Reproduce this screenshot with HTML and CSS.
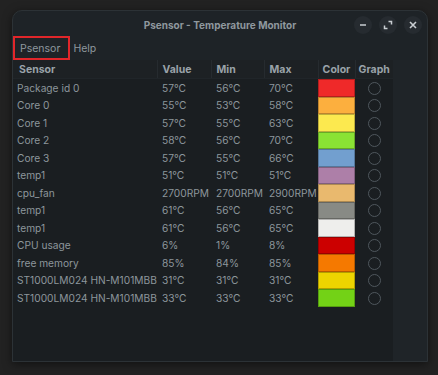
FILE: index.html
```html
<!DOCTYPE html>
<html lang="en">
<head>
<meta charset="UTF-8">
<meta name="viewport" content="width=device-width, initial-scale=1.0">
<title>Psensor - Temperature Monitor</title>
<link rel="stylesheet" href="styles.css">
</head>
<body>
<div class="window">
  <div class="titlebar">
    <div class="title">Psensor - Temperature Monitor</div>
    <div class="controls">
      <span class="ctl"><svg width="10" height="10" viewBox="0 0 10 10"><path d="M2 5h6" stroke="#c9ced2" stroke-width="1.6"/></svg></span>
      <span class="ctl"><svg width="10" height="10" viewBox="0 0 10 10"><path d="M5.5 1.5h3v3M4.5 8.5h-3v-3" stroke="#c9ced2" stroke-width="1.5" fill="none"/></svg></span>
      <span class="ctl"><svg width="10" height="10" viewBox="0 0 10 10"><path d="M2 2l6 6M8 2l-6 6" stroke="#c9ced2" stroke-width="1.6"/></svg></span>
    </div>
  </div>
  <div class="menubar">
    <span class="menu active">Psensor</span>
    <span class="menu">Help</span>
  </div>
  <div class="content">
    <table class="sensors">
      <colgroup>
        <col class="c-name"><col class="c-val"><col class="c-min"><col class="c-max"><col class="c-color"><col class="c-graph">
      </colgroup>
      <thead>
        <tr>
          <th>Sensor</th>
          <th>Value</th>
          <th>Min</th>
          <th>Max</th>
          <th class="center">Color</th>
          <th class="center">Graph</th>
        </tr>
      </thead>
      <tbody>
        <tr><td>Package id 0</td><td>57°C</td><td>56°C</td><td>70°C</td><td class="sw red"></td><td class="g"><span class="dot"></span></td></tr>
        <tr><td>Core 0</td><td>55°C</td><td>53°C</td><td>58°C</td><td class="sw orange"></td><td class="g"><span class="dot"></span></td></tr>
        <tr><td>Core 1</td><td>57°C</td><td>55°C</td><td>63°C</td><td class="sw yellow"></td><td class="g"><span class="dot"></span></td></tr>
        <tr><td>Core 2</td><td>58°C</td><td>56°C</td><td>70°C</td><td class="sw green"></td><td class="g"><span class="dot"></span></td></tr>
        <tr><td>Core 3</td><td>57°C</td><td>55°C</td><td>66°C</td><td class="sw blue"></td><td class="g"><span class="dot"></span></td></tr>
        <tr><td>temp1</td><td>51°C</td><td>51°C</td><td>51°C</td><td class="sw purple"></td><td class="g"><span class="dot"></span></td></tr>
        <tr><td>cpu_fan</td><td>2700RPM</td><td>2700RPM</td><td>2900RPM</td><td class="sw tan"></td><td class="g"><span class="dot"></span></td></tr>
        <tr><td>temp1</td><td>61°C</td><td>56°C</td><td>65°C</td><td class="sw gray"></td><td class="g"><span class="dot"></span></td></tr>
        <tr><td>temp1</td><td>61°C</td><td>56°C</td><td>65°C</td><td class="sw white"></td><td class="g"><span class="dot"></span></td></tr>
        <tr><td>CPU usage</td><td>6%</td><td>1%</td><td>8%</td><td class="sw darkred"></td><td class="g"><span class="dot"></span></td></tr>
        <tr><td>free memory</td><td>85%</td><td>84%</td><td>85%</td><td class="sw darkorange"></td><td class="g"><span class="dot"></span></td></tr>
        <tr><td>ST1000LM024 HN-M101MBB</td><td>31°C</td><td>31°C</td><td>31°C</td><td class="sw darkyellow"></td><td class="g"><span class="dot"></span></td></tr>
        <tr><td>ST1000LM024 HN-M101MBB</td><td>33°C</td><td>33°C</td><td>33°C</td><td class="sw darkgreen"></td><td class="g"><span class="dot"></span></td></tr>
      </tbody>
    </table>
    <div class="side"></div>
  </div>
</div>
</body>
</html>
```
FILE: styles.css
```css
/* psensor window */
body {
  margin: 0;
  height: 375px;
  background: #222222;
  font-family: Inter, "Noto Sans", sans-serif;
  overflow: hidden;
}
.window {
  margin: 10px 10px 0 12px;
  width: 414px;
  height: 350px;
  background: #1e2327;
  border: 1px solid #2c3236;
  border-radius: 10px 10px 0 0;
  box-shadow: 0 2px 10px rgba(0, 0, 0, 0.5);
  display: flex;
  flex-direction: column;
  overflow: hidden;
}
.titlebar {
  height: 25px;
  display: flex;
  align-items: center;
  justify-content: center;
  position: relative;
}
.title {
  color: #8f989e;
  font-size: 10px;
  font-weight: 700;
  padding-top: 2px;
}
.controls {
  position: absolute;
  right: 5px;
  top: 5px;
  display: flex;
  gap: 7px;
}
.ctl {
  width: 18px;
  height: 18px;
  border-radius: 50%;
  background: #262b30;
  display: flex;
  align-items: center;
  justify-content: center;
}
.menubar {
  height: 24px;
  display: flex;
  align-items: stretch;
}
.menu {
  color: #8f989e;
  font-size: 10.5px;
  display: flex;
  align-items: center;
  padding: 0 5px 0 3px;
}
.menu.active {
  border: 2px solid #e1262a;
  padding: 0 8px 0 5px;
}
.content {
  flex: 1;
  display: flex;
  background: #1a1e21;
}
.side {
  flex: 1;
  background: #1f2428;
}
.sensors {
  width: 380px;
  table-layout: fixed;
  border-collapse: collapse;
  font-size: 10.2px;
  color: #8d969c;
  align-self: flex-start;
}
.c-name { width: 144px; }
.c-val { width: 54px; }
.c-min { width: 53px; }
.c-max { width: 54px; }
.c-color { width: 37px; }
.c-graph { width: 38px; }
.sensors th {
  height: 18px;
  padding: 0 5px;
  text-align: left;
  font-weight: 700;
  font-size: 10.5px;
  color: #9aa3a9;
  background: #1d2124;
  border-left: 1px solid #262b2f;
  border-bottom: 1px solid #202529;
}
.sensors th:first-child {
  border-left: none;
  padding-left: 6px;
}
.sensors th.center {
  text-align: center;
  padding: 0;
}
.sensors td {
  height: 17.5px;
  padding: 0 0 0 5px;
  white-space: nowrap;
}
.sensors td:first-child {
  padding-left: 4px;
}
.sensors td.sw {
  padding: 0;
  box-shadow: inset 0 0 0 1px rgba(0, 0, 0, 0.25);
}
.sensors td.g {
  padding: 0;
  text-align: center;
}
.dot {
  display: inline-block;
  width: 11px;
  height: 11px;
  border: 1px solid #4f575d;
  border-radius: 50%;
  vertical-align: middle;
}
.red { background: #ef2929; }
.orange { background: #fcaf3e; }
.yellow { background: #fce94f; }
.green { background: #8ae234; }
.blue { background: #729fcf; }
.purple { background: #ad7fa8; }
.tan { background: #e9b96e; }
.gray { background: #888a85; }
.white { background: #eeeeec; }
.darkred { background: #cc0000; }
.darkorange { background: #f57900; }
.darkyellow { background: #edd400; }
.darkgreen { background: #73d216; }
```
